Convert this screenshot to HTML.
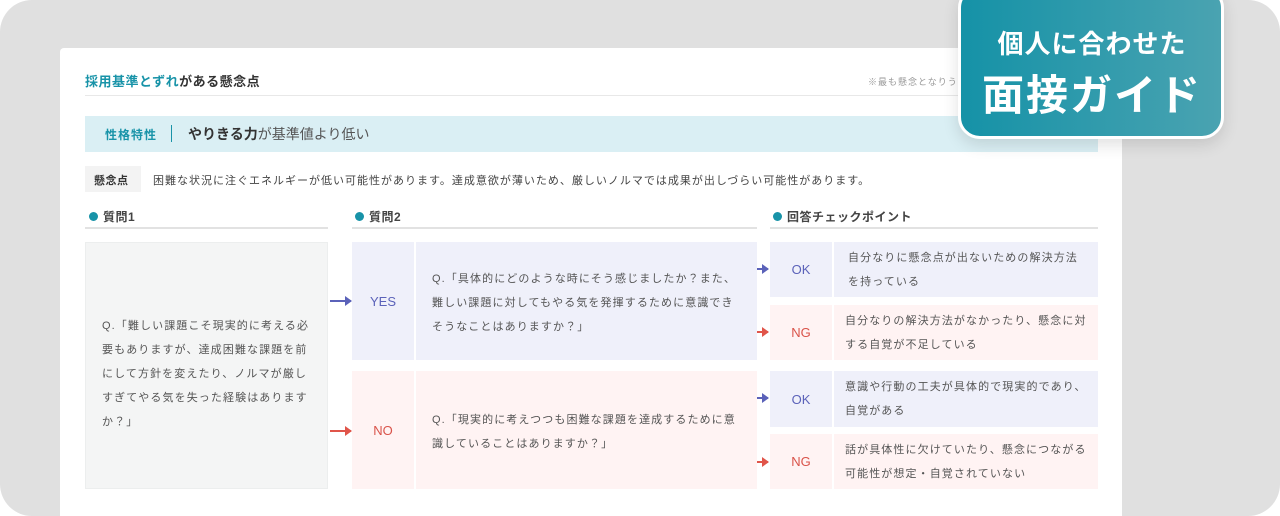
<!DOCTYPE html>
<html style="width:1280px;height:516px;overflow:hidden"><head><meta charset="utf-8">
<style>
*{margin:0;padding:0;box-sizing:border-box}
body{width:1280px;height:516px;overflow:hidden;background:#fff;font-family:"Liberation Sans","Noto Sans CJK JP",sans-serif;color:#555;position:relative}
.bg{position:absolute;left:0;top:0;width:1280px;height:516px;background:#e0e0e0;border-radius:32px}
.card{position:absolute;left:60px;top:48px;width:1062px;height:468px;background:#fff;border-radius:4px 4px 0 0}
.abs{position:absolute;white-space:nowrap}
.t11{font-size:11px;letter-spacing:1px}
.blue{color:#5b62b9}.red{color:#d9534a}
.cell{position:absolute}
.lbl{position:absolute;display:flex;align-items:center;justify-content:center;font-size:13px}
.txt{position:absolute;font-size:11px;letter-spacing:1.1px;line-height:24px;white-space:nowrap}
.yb{background:#eff0fa}.nb{background:#fff3f3}
.arrow{position:absolute;height:2px}
.arrow::after{content:"";position:absolute;right:-1px;top:-4px;border-left:7px solid;border-left-color:inherit;border-top:5px solid transparent;border-bottom:5px solid transparent}
.hd{position:absolute;font-size:12px;font-weight:bold;color:#444;letter-spacing:.5px}
.hd::before{content:"";position:absolute;left:-14px;top:4px;width:9px;height:9px;border-radius:50%;background:#1893a8}
.hl{position:absolute;height:2px;background:#e2e2e2}
</style></head><body>
<div class="bg"></div>
<div class="card"></div>
<div class="abs" style="left:85px;top:71px;font-size:13px;font-weight:bold;color:#333;letter-spacing:.5px"><span style="color:#1893a8">採用基準とずれ</span>がある懸念点</div>
<div class="abs" style="left:868px;top:75px;font-size:9px;color:#999;letter-spacing:1px">※最も懸念となりうる点</div>
<div style="position:absolute;left:85px;top:95px;width:1013px;height:1px;background:#e8e8e8"></div>
<div style="position:absolute;left:85px;top:116px;width:1013px;height:36px;background:#daeff4"></div>
<div class="abs" style="left:105px;top:126px;font-size:12px;font-weight:bold;color:#1893a8;letter-spacing:1px">性格特性</div>
<div style="position:absolute;left:171px;top:125px;width:1px;height:17px;background:#1893a8"></div>
<div class="abs" style="left:188px;top:124px;font-size:14px;color:#333"><b>やりきる力</b><span style="color:#555">が基準値より低い</span></div>
<div style="position:absolute;left:85px;top:166px;width:56px;height:26px;background:#f3f3f3"></div>
<div class="abs" style="left:94px;top:172px;font-size:11px;font-weight:bold;color:#333;letter-spacing:.5px">懸念点</div>
<div class="abs t11" style="left:153px;top:172px;color:#444">困難な状況に注ぐエネルギーが低い可能性があります。達成意欲が薄いため、厳しいノルマでは成果が出しづらい可能性があります。</div>

<div class="hd" style="left:103px;top:208px">質問1</div>
<div class="hl" style="left:85px;top:227px;width:243px"></div>
<div class="hd" style="left:369px;top:208px">質問2</div>
<div class="hl" style="left:352px;top:227px;width:405px"></div>
<div class="hd" style="left:787px;top:208px">回答チェックポイント</div>
<div class="hl" style="left:770px;top:227px;width:328px"></div>

<div class="cell" style="left:85px;top:242px;width:243px;height:247px;background:#f4f5f5;border:1px solid #eceeee"></div>
<div class="txt" style="left:102px;top:314px">Q.「難しい課題こそ現実的に考える必<br>要もありますが、達成困難な課題を前<br>にして方針を変えたり、ノルマが厳し<br>すぎてやる気を失った経験はあります<br>か？」</div>

<div class="arrow" style="left:330px;top:300px;width:21px;background:#5b62b9;border-color:#5b62b9"></div>
<div class="arrow" style="left:330px;top:430px;width:21px;background:#e0554a;border-color:#e0554a"></div>

<div class="cell yb" style="left:352px;top:242px;width:62px;height:118px"></div>
<div class="lbl blue" style="left:352px;top:242px;width:62px;height:118px">YES</div>
<div class="cell yb" style="left:416px;top:242px;width:341px;height:118px"></div>
<div class="txt" style="left:432px;top:267px">Q.「具体的にどのような時にそう感じましたか？また、<br>難しい課題に対してもやる気を発揮するために意識でき<br>そうなことはありますか？」</div>

<div class="cell nb" style="left:352px;top:371px;width:62px;height:118px"></div>
<div class="lbl red" style="left:352px;top:371px;width:62px;height:118px">NO</div>
<div class="cell nb" style="left:416px;top:371px;width:341px;height:118px"></div>
<div class="txt" style="left:432px;top:408px">Q.「現実的に考えつつも困難な課題を達成するために意<br>識していることはありますか？」</div>

<div class="arrow" style="left:757px;top:268px;width:11px;background:#5b62b9;border-color:#5b62b9"></div>
<div class="arrow" style="left:757px;top:331px;width:11px;background:#e0554a;border-color:#e0554a"></div>
<div class="arrow" style="left:757px;top:397px;width:11px;background:#5b62b9;border-color:#5b62b9"></div>
<div class="arrow" style="left:757px;top:461px;width:11px;background:#e0554a;border-color:#e0554a"></div>

<div class="cell yb" style="left:770px;top:242px;width:62px;height:55px"></div>
<div class="lbl blue" style="left:770px;top:242px;width:62px;height:55px">OK</div>
<div class="cell yb" style="left:834px;top:242px;width:264px;height:55px"></div>
<div class="txt" style="left:848px;top:246px">自分なりに懸念点が出ないための解決方法<br>を持っている</div>

<div class="cell nb" style="left:770px;top:305px;width:62px;height:55px"></div>
<div class="lbl red" style="left:770px;top:305px;width:62px;height:55px">NG</div>
<div class="cell nb" style="left:834px;top:305px;width:264px;height:55px"></div>
<div class="txt" style="left:845px;top:309px">自分なりの解決方法がなかったり、懸念に対<br>する自覚が不足している</div>

<div class="cell yb" style="left:770px;top:371px;width:62px;height:56px"></div>
<div class="lbl blue" style="left:770px;top:371px;width:62px;height:56px">OK</div>
<div class="cell yb" style="left:834px;top:371px;width:264px;height:56px"></div>
<div class="txt" style="left:845px;top:375px">意識や行動の工夫が具体的で現実的であり、<br>自覚がある</div>

<div class="cell nb" style="left:770px;top:434px;width:62px;height:55px"></div>
<div class="lbl red" style="left:770px;top:434px;width:62px;height:55px">NG</div>
<div class="cell nb" style="left:834px;top:434px;width:264px;height:55px"></div>
<div class="txt" style="left:845px;top:438px">話が具体性に欠けていたり、懸念につながる<br>可能性が想定・自覚されていない</div>

<div style="position:absolute;left:958px;top:-14px;width:266px;height:153px;border-radius:22px;border:3px solid #fff;background:linear-gradient(90deg,#1592a7,#4aa3b1);box-shadow:0 6px 16px rgba(0,0,0,.12)"></div>
<div class="abs" style="left:962px;top:24px;width:260px;text-align:center;color:#fff;font-size:26px;font-weight:bold;letter-spacing:1px">個人に合わせた</div>
<div class="abs" style="left:962px;top:62px;width:260px;text-align:center;color:#fff;font-size:42px;font-weight:bold;letter-spacing:2px">面接ガイド</div>
</body></html>
